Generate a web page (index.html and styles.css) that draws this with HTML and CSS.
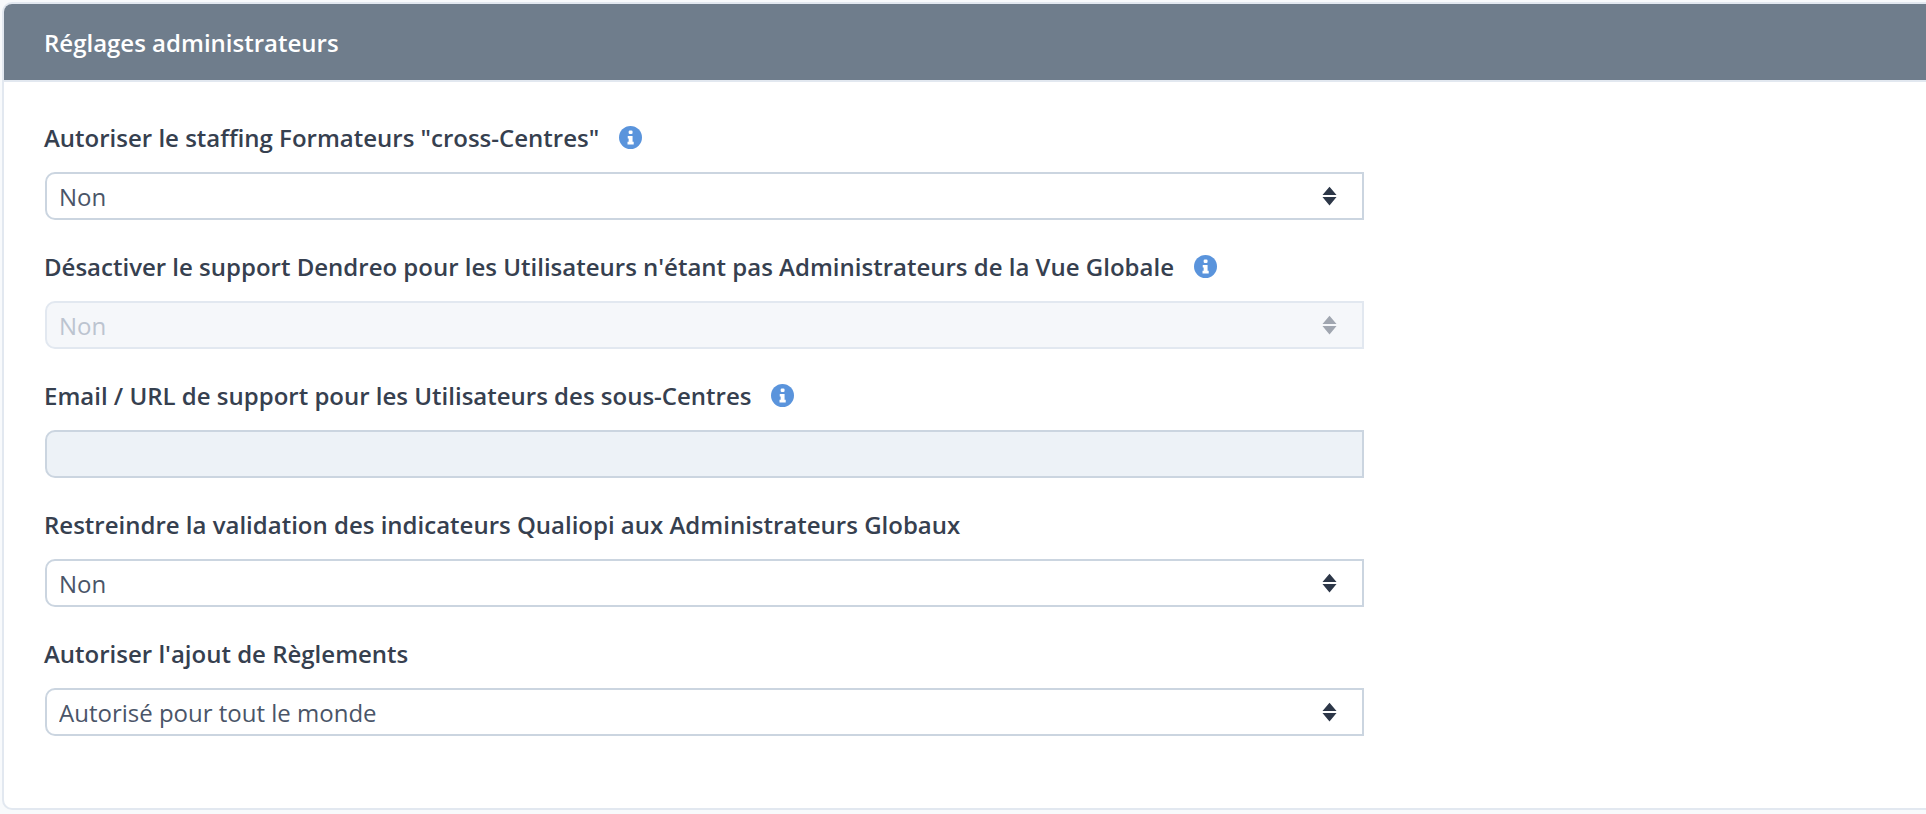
FILE: index.html
```html
<!DOCTYPE html>
<html lang="fr">
<head>
<meta charset="utf-8">
<title>Réglages administrateurs</title>
<link rel="stylesheet" href="styles.css">
</head>
<body>
<svg class="defs" width="0" height="0" aria-hidden="true">
  <symbol id="info" viewBox="0 0 20 20">
    <circle cx="10" cy="10" r="10" fill="#5a94dc"/>
    <rect x="8.4" y="4" width="3.4" height="3" rx="1" fill="#fff"/>
    <path d="M7.6 8.6h4.2v5.2h1v2.2H7.400v-2.200h1V10.800h-.8z" fill="#fff"/>
  </symbol>
  <symbol id="updown" viewBox="0 0 16 20">
    <path d="M8 0 15.500 9H.5zM.5 11h15L8 20z"/>
  </symbol>
</svg>
<section class="panel">
  <h2 class="panel-title">Réglages administrateurs</h2>
  <form class="panel-body">
    <div class="field">
      <label class="label">Autoriser le staffing Formateurs "cross-Centres"<svg class="info"><use href="#info"/></svg></label>
      <div class="select-wrap">
        <select class="control"><option>Non</option></select>
        <svg class="arrows"><use href="#updown"/></svg>
      </div>
    </div>
    <div class="field">
      <label class="label">Désactiver le support Dendreo pour les Utilisateurs n'étant pas Administrateurs de la Vue Globale<svg class="info"><use href="#info"/></svg></label>
      <div class="select-wrap is-disabled">
        <select class="control" disabled><option>Non</option></select>
        <svg class="arrows"><use href="#updown"/></svg>
      </div>
    </div>
    <div class="field">
      <label class="label">Email / URL de support pour les Utilisateurs des sous-Centres<svg class="info"><use href="#info"/></svg></label>
      <input class="control control-input" type="text" disabled>
    </div>
    <div class="field">
      <label class="label">Restreindre la validation des indicateurs Qualiopi aux Administrateurs Globaux</label>
      <div class="select-wrap">
        <select class="control"><option>Non</option></select>
        <svg class="arrows"><use href="#updown"/></svg>
      </div>
    </div>
    <div class="field">
      <label class="label">Autoriser l'ajout de Règlements</label>
      <div class="select-wrap">
        <select class="control"><option>Autorisé pour tout le monde</option></select>
        <svg class="arrows"><use href="#updown"/></svg>
      </div>
    </div>
  </form>
</section>
</body>
</html>
```
FILE: styles.css
```css
* { box-sizing: border-box; }
html, body { height: 100%; }
body {
  margin: 0;
  padding: 2px 0 4px 2px;
  background: #f8fafc;
  color: #2d3748;
  font-family: "Open Sans", "Noto Sans", sans-serif;
  overflow: hidden;
}
.defs { position: absolute; }
.panel {
  height: 808px;
  background: #fff;
  border: 2px solid #e2e8f0;
  border-right: 0;
  border-radius: 10px 0 0 10px;
  overflow: hidden;
}
.panel-title {
  margin: 0;
  height: 78px;
  padding: 0 40px;
  display: flex;
  align-items: center;
  background: #6f7d8c;
  border-bottom: 2px solid #e2e8f0;
  color: #fff;
  font-size: 24px;
  font-weight: 600;
}
.panel-body {
  width: 1360px;
  padding: 39px 0 0 41px;
  display: flex;
  flex-direction: column;
  gap: 30px;
}
.field { display: flex; flex-direction: column; }
.label {
  display: flex;
  align-items: center;
  height: 32px;
  margin: 0 0 19px -1px;
  font-size: 24px;
  font-weight: 600;
  color: #36404f;
}
.info { width: 23px; height: 23px; margin-left: 20px; flex: none; }
.select-wrap { position: relative; }
.control {
  display: block;
  width: 100%;
  height: 48px;
  padding: 0 12px;
  appearance: none;
  background: #fff;
  border: 2px solid #cbd5e0;
  border-radius: 10px 0 0 10px;
  color: #4a5568;
  font: 400 24px "Open Sans", "Noto Sans", sans-serif;
}
.control:disabled { background: #f5f7fa; border-color: #e2e8f0; color: #bcc4d0; opacity: 1; }
.control-input:disabled { background: #edf2f7; border-color: #cbd5e0; }
.arrows {
  position: absolute;
  right: 27px;
  top: 14px;
  width: 15px;
  height: 20px;
  fill: #2d3748;
  pointer-events: none;
}
.is-disabled .arrows { fill: #a0a6b0; }
```
